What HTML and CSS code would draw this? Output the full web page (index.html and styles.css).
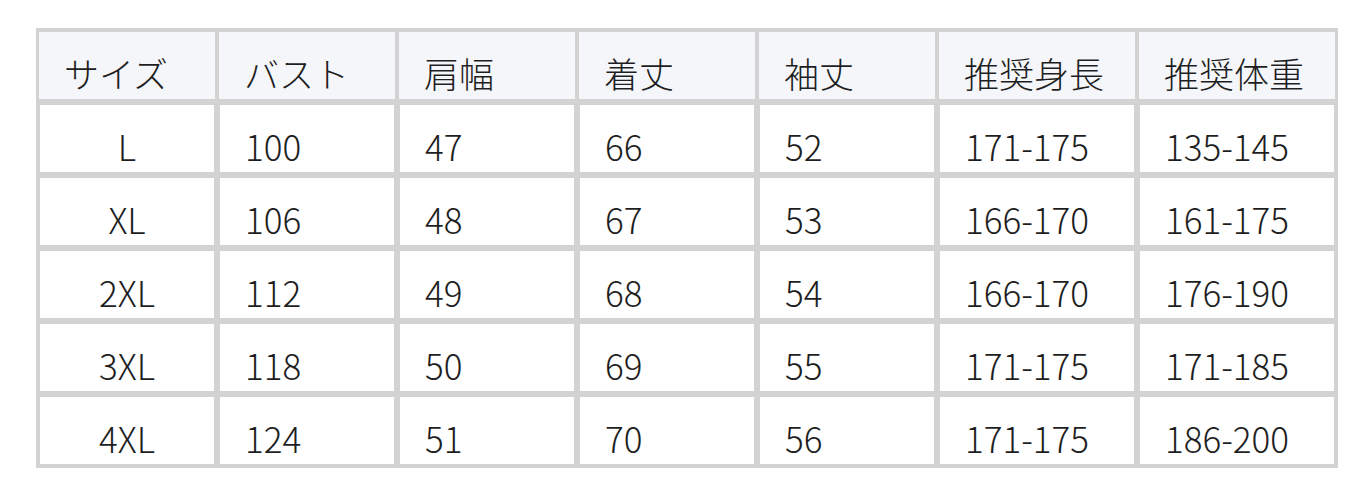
FILE: index.html
```html
<!DOCTYPE html>
<html lang="ja">
<head>
<meta charset="utf-8">
<link rel="stylesheet" href="styles.css">
</head>
<body>
<table class="size-table">
  <colgroup>
    <col class="c-s"><col class="c-s"><col class="c-s"><col class="c-s"><col class="c-s"><col class="c-w"><col class="c-w">
  </colgroup>
  <thead>
    <tr><th>サイズ</th><th>バスト</th><th>肩幅</th><th>着丈</th><th>袖丈</th><th>推奨身長</th><th>推奨体重</th></tr>
  </thead>
  <tbody>
    <tr><td class="size">L</td><td>100</td><td>47</td><td>66</td><td>52</td><td>171-175</td><td>135-145</td></tr>
    <tr><td class="size">XL</td><td>106</td><td>48</td><td>67</td><td>53</td><td>166-170</td><td>161-175</td></tr>
    <tr><td class="size">2XL</td><td>112</td><td>49</td><td>68</td><td>54</td><td>166-170</td><td>176-190</td></tr>
    <tr><td class="size">3XL</td><td>118</td><td>50</td><td>69</td><td>55</td><td>171-175</td><td>171-185</td></tr>
    <tr><td class="size">4XL</td><td>124</td><td>51</td><td>70</td><td>56</td><td>171-175</td><td>186-200</td></tr>
  </tbody>
</table>
</body>
</html>
```
FILE: styles.css
```css
html, body {
  margin: 0;
  background: #ffffff;
}
body {
  padding: 28px 0 0 36px;
  font-family: "Noto Sans CJK JP", "Noto Sans", sans-serif;
  color: #1e1e1e;
}
.size-table {
  border-collapse: separate;
  border-spacing: 0;
  border: 1px solid #d3d3d3;
  table-layout: fixed;
  width: 1300px;
  font-size: 35px;
  font-weight: 300;
  line-height: 50px;
}
.c-s { width: 180px; }
.c-w { width: 200px; }
.size-table th,
.size-table td {
  text-align: left;
  vertical-align: top;
  font-weight: 300;
  padding: 16px 0 0 25px;
  white-space: nowrap;
}
.size-table thead tr { height: 73px; }
.size-table tbody tr { height: 73px; }
.size-table th {
  background: #f5f6fa;
  border-style: solid;
  border-color: #d3d3d3;
  border-width: 3px 2px 3px 2px;
}
.size-table td {
  background: #ffffff;
  border: 3px solid #d3d3d3;
}
.size-table td.size {
  text-align: center;
  padding-left: 0;
}
```
